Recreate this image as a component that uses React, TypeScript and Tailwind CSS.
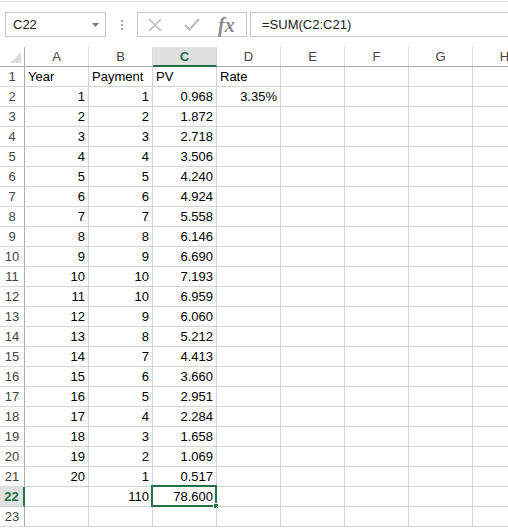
import React from 'react'

const font = { fontFamily: '"Liberation Sans", Arial, sans-serif' }

const payments = [1, 2, 3, 4, 5, 6, 7, 8, 9, 10, 10, 9, 8, 7, 6, 5, 4, 3, 2, 1]
const pv = [
  '0.968', '1.872', '2.718', '3.506', '4.240', '4.924', '5.558', '6.146', '6.690', '7.193',
  '6.959', '6.060', '5.212', '4.413', '3.660', '2.951', '2.284', '1.658', '1.069', '0.517'
]

const columns = ['A', 'B', 'C', 'D', 'E', 'F', 'G', 'H']

type Cell = { text: string; align?: 'left' | 'right' }

function buildRows(): Cell[][] {
  const rows: Cell[][] = []
  rows.push([
    { text: 'Year', align: 'left' },
    { text: 'Payment', align: 'left' },
    { text: 'PV', align: 'left' },
    { text: 'Rate', align: 'left' }
  ])
  for (let i = 0; i < 20; i++) {
    const row: Cell[] = [
      { text: String(i + 1) },
      { text: String(payments[i]) },
      { text: pv[i] }
    ]
    if (i === 0) row.push({ text: '3.35%' })
    rows.push(row)
  }
  rows.push([{ text: '' }, { text: '110' }, { text: '78.600' }])
  rows.push([])
  return rows
}

const FormulaBar = () => (
  <div className="flex h-[45px] items-start pt-[10px]">
    {/* name box */}
    <div className="ml-[5px] flex h-[25px] w-[101px] items-center justify-between border border-[#c6c6c6] pl-[7px] pr-[6px] text-[13px] text-[#222]">
      <span>C22</span>
      <svg width="7" height="4" viewBox="0 0 7 4">
        <path d="M0 0h7L3.5 4z" fill="#7a7a7a" />
      </svg>
    </div>
    <div className="flex h-[25px] w-[31px] flex-col items-center justify-center gap-[2px]">
      <span className="h-[2px] w-[2px] bg-[#a8a8a8]" />
      <span className="h-[2px] w-[2px] bg-[#a8a8a8]" />
      <span className="h-[2px] w-[2px] bg-[#a8a8a8]" />
    </div>
    {/* cancel / enter / fx */}
    <div className="flex h-[25px] w-[110px] items-center border border-[#c6c6c6]">
      <svg className="ml-[10px]" width="14" height="14" viewBox="0 0 14 14">
        <path d="M1 1L13 13M13 1L1 13" stroke="#bdbdbd" strokeWidth="1.6" />
      </svg>
      <svg className="ml-[22px]" width="16" height="13" viewBox="0 0 16 13">
        <path d="M1 7l4.5 4.5L15 1" stroke="#bdbdbd" strokeWidth="2.2" fill="none" />
      </svg>
      <span
        className="ml-[18px] text-[20px] font-bold italic leading-none text-[#8a8a8a]"
        style={{ fontFamily: '"Liberation Serif", "Times New Roman", serif' }}
      >
        fx
      </span>
    </div>
    <div className="ml-[3px] flex h-[25px] flex-1 items-center border-y border-l border-[#c6c6c6] pl-[11px] text-[13px] text-[#222]">
      =SUM(C2:C21)
    </div>
  </div>
)

export default function App() {
  const rows = buildRows()

  return (
    <div className="h-[531px] w-[508px] overflow-hidden bg-white" style={font}>
      <div className="mt-px h-px bg-[#d8d8d8]" />
      <FormulaBar />

      <div className="grid w-max grid-cols-[25px_repeat(8,64px)] auto-rows-[20px]">
        {/* corner */}
        <div className="relative border-b border-r border-[#ababab]">
          <svg className="absolute bottom-[3px] right-[3px]" width="11" height="11" viewBox="0 0 11 11">
            <path d="M11 0V11H0z" fill="#dcdcdc" />
          </svg>
        </div>
        {columns.map((c) =>
          c === 'C' ? (
            <div
              key={c}
              className="flex items-center justify-center border-b-2 border-r border-b-[#217346] border-r-[#d0d0d0] bg-[#e1e1e1] pt-[2px] text-[13px] font-bold text-[#217346]"
            >
              {c}
            </div>
          ) : (
            <div
              key={c}
              className="flex items-center justify-center border-b border-r border-b-[#ababab] border-r-[#dadada] text-[13px] text-[#444]"
            >
              {c}
            </div>
          )
        )}

        {rows.map((row, r) => {
          const n = r + 1
          const selRow = n === 22
          return (
            <React.Fragment key={n}>
              {selRow ? (
                <div className="flex items-center justify-center border-b border-r-2 border-b-[#d0d0d0] border-r-[#217346] bg-[#e1e1e1] text-[13px] font-bold text-[#217346]">
                  {n}
                </div>
              ) : (
                <div className="flex items-center justify-center border-b border-r border-b-[#dadada] border-r-[#ababab] text-[13px] text-[#444]">
                  {n}
                </div>
              )}
              {columns.map((c, ci) => {
                const cell = row[ci]
                const selected = selRow && c === 'C'
                return (
                  <div
                    key={c}
                    className={
                      'relative flex items-center border-b border-r border-[#d4d4d4] px-[3px] text-[13px] text-black ' +
                      (cell?.align === 'left' ? 'justify-start' : 'justify-end')
                    }
                  >
                    {cell?.text}
                    {selected && (
                      <div className="absolute -left-[2px] -top-[2px] bottom-[-1px] right-[-1px] border-2 border-[#217346]">
                        <span className="absolute -bottom-[4px] -right-[4px] h-[6px] w-[6px] border border-white bg-[#217346]" />
                      </div>
                    )}
                  </div>
                )
              })}
            </React.Fragment>
          )
        })}
      </div>
    </div>
  )
}
